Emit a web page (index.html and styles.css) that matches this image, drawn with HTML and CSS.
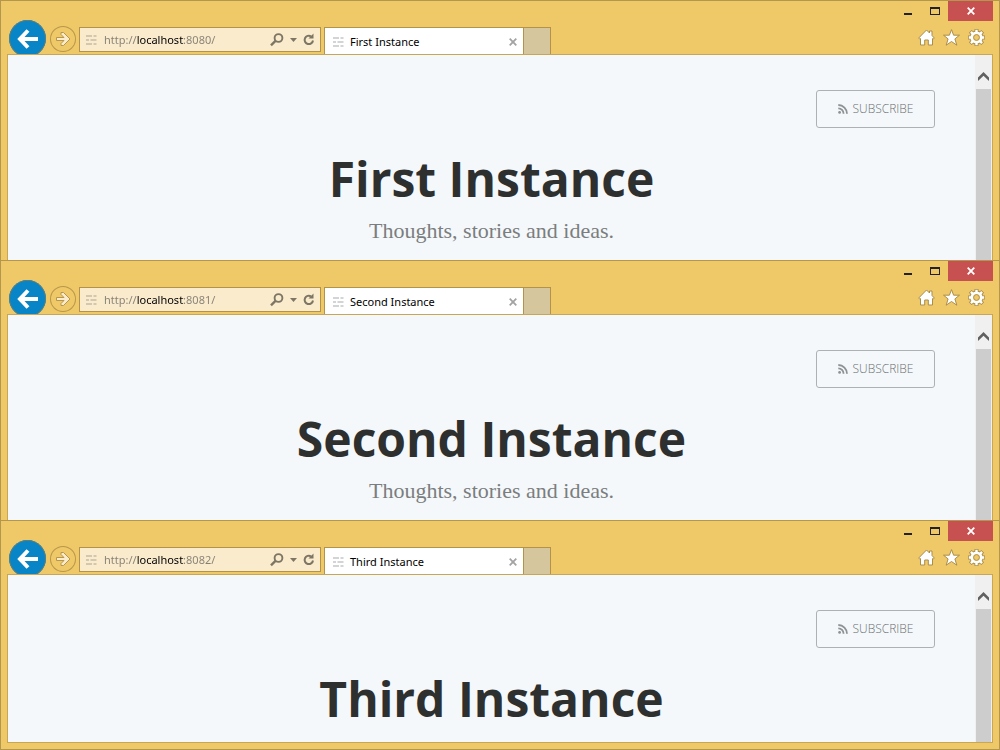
FILE: index.html
```
<!DOCTYPE html>
<html lang="en">
<head>
<meta charset="utf-8">
<meta name="viewport" content="width=device-width, initial-scale=1">
<title>Instances</title>
<link rel="stylesheet" href="styles.css">
</head>
<body>
<svg class="sprite" aria-hidden="true">
  <symbol id="back" viewBox="0 0 37 37"><path d="M10.500 19H29M19 10.500L11 19L19 27.500" fill="none" stroke="#fff" stroke-width="4"/></symbol>
  <symbol id="forward" viewBox="0 0 26 26"><path d="M6.500 11.500H14L11 8.500V6.500H13.500L20 13L13.500 19.500H11V17.500L14 14.500H6.500Z" fill="#faebcd" stroke="#b8974a" stroke-width="1"/></symbol>
  <symbol id="ghost" viewBox="0 0 11 10"><path d="M0 1H6M7.500 1H10.500M0 5H3M4.500 5H10.500M0 9H6M7.500 9H10.500" stroke="currentColor" stroke-width="1.600" fill="none"/></symbol>
  <symbol id="search" viewBox="0 0 14 14"><circle cx="8.500" cy="5" r="3.900" fill="none" stroke="#7d7665" stroke-width="1.900"/><path d="M5.700 7.700L1 12.400" stroke="#7d7665" stroke-width="2.400"/></symbol>
  <symbol id="caret" viewBox="0 0 7 4"><path d="M0 0H7L3.500 4Z" fill="#7d7665"/></symbol>
  <symbol id="reload" viewBox="0 0 12 13"><path d="M8 3.300A4.200 4.200 0 1 0 10 7.500" fill="none" stroke="#7d7665" stroke-width="2"/><path d="M10.500 .500V5.500H5.500Z" fill="#7d7665"/></symbol>
  <symbol id="cross" viewBox="0 0 8 8"><path d="M.700 .700L7.300 7.300M7.300 .700L.700 7.300" stroke="currentColor" stroke-width="1.800" fill="none"/></symbol>
  <symbol id="home" viewBox="0 0 17 17"><path d="M8.500 1L11.500 4V2H14V6.500L16.300 9L15.200 10.200L14.500 9.600V16H10.300V11H6.700V16H2.500V9.600L1.800 10.200L.700 9Z" fill="#fff" stroke="#a98d4c" stroke-width="1"/></symbol>
  <symbol id="star" viewBox="0 0 17 17"><path d="M8.500 .600L10.600 6.200H16.500L11.900 9.900L13.800 16.200L8.500 12.500L3.200 16.200L5.100 9.900L.500 6.200H6.400Z" fill="#fff" stroke="#a98d4c" stroke-width="1"/></symbol>
  <symbol id="gear" viewBox="0 0 17 17"><g fill="none"><path d="M8.500 0V17M0 8.500H17M2.300 2.300L14.700 14.700M14.700 2.300L2.300 14.700" stroke="#a98d4c" stroke-width="4"/><circle cx="8.500" cy="8.500" r="5" stroke="#a98d4c" stroke-width="3.800"/><path d="M8.500 .800V16.200M.800 8.500H16.200M2.900 2.900L14.100 14.100M14.100 2.900L2.900 14.100" stroke="#fff" stroke-width="2.400"/></g><circle cx="8.500" cy="8.500" r="4.700" fill="#efc868" stroke="#fff" stroke-width="2.800"/><circle cx="8.500" cy="8.500" r="2.900" fill="#efc868" stroke="#a98d4c" stroke-width=".9"/></symbol>
  <symbol id="up" viewBox="0 0 11 9"><path d="M0 5.500L5.500 0L11 5.500V9L5.500 3.800L0 9Z" fill="#606060"/></symbol>
  <symbol id="rss" viewBox="0 0 10 10"><circle cx="1.600" cy="8.400" r="1.400" fill="#8f9294"/><path d="M.300 4.400A5.300 5.300 0 0 1 5.600 9.700M.300 1A8.700 8.700 0 0 1 9 9.700" fill="none" stroke="#8f9294" stroke-width="1.800"/></symbol>
</svg>

<main class="desktop">
  <section class="window">
    <header class="chrome">
      <div class="nav">
        <button class="back" aria-label="Back"><svg width="37" height="37"><use href="#back"/></svg></button>
        <button class="forward" aria-label="Forward"><svg width="26" height="26"><use href="#forward"/></svg></button>
        <form class="address">
          <svg class="site" width="11" height="10"><use href="#ghost"/></svg>
          <input class="url" type="text" aria-label="Address" value="http://localhost:8080/">
          <button type="button" class="plain" aria-label="Search"><svg width="14" height="14"><use href="#search"/></svg></button>
          <button type="button" class="plain" aria-label="Show addresses"><svg width="7" height="4"><use href="#caret"/></svg></button>
          <button type="button" class="plain" aria-label="Refresh"><svg width="12" height="13"><use href="#reload"/></svg></button>
        </form>
        <div class="tab">
          <svg class="tab-icon" width="11" height="10"><use href="#ghost"/></svg>
          <span class="tab-title">First Instance</span>
          <button class="plain tab-close" aria-label="Close tab"><svg width="8" height="8"><use href="#cross"/></svg></button>
        </div>
        <button class="new-tab" aria-label="New tab"></button>
      </div>
      <div class="side">
        <div class="controls">
          <button class="control" aria-label="Minimize"><span class="minimize"></span></button>
          <button class="control" aria-label="Maximize"><span class="maximize"></span></button>
          <button class="close" aria-label="Close"><svg width="8" height="8"><use href="#cross"/></svg></button>
        </div>
        <div class="tools">
          <button class="plain" aria-label="Home"><svg width="17" height="17"><use href="#home"/></svg></button>
          <button class="plain" aria-label="Favorites"><svg width="17" height="17"><use href="#star"/></svg></button>
          <button class="plain" aria-label="Tools"><svg width="17" height="17"><use href="#gear"/></svg></button>
        </div>
      </div>
    </header>
    <div class="viewport">
      <article class="page">
        <a class="subscribe" href="#"><svg width="10" height="10"><use href="#rss"/></svg>SUBSCRIBE</a>
        <h1 class="title">First Instance</h1>
        <p class="tagline">Thoughts, stories and ideas.</p>
      </article>
      <div class="scrollbar"><button class="scroll-up" aria-label="Scroll up"><svg width="11" height="9"><use href="#up"/></svg></button><div class="thumb"></div></div>
    </div>
  </section>

  <section class="window">
    <header class="chrome">
      <div class="nav">
        <button class="back" aria-label="Back"><svg width="37" height="37"><use href="#back"/></svg></button>
        <button class="forward" aria-label="Forward"><svg width="26" height="26"><use href="#forward"/></svg></button>
        <form class="address">
          <svg class="site" width="11" height="10"><use href="#ghost"/></svg>
          <input class="url" type="text" aria-label="Address" value="http://localhost:8081/">
          <button type="button" class="plain" aria-label="Search"><svg width="14" height="14"><use href="#search"/></svg></button>
          <button type="button" class="plain" aria-label="Show addresses"><svg width="7" height="4"><use href="#caret"/></svg></button>
          <button type="button" class="plain" aria-label="Refresh"><svg width="12" height="13"><use href="#reload"/></svg></button>
        </form>
        <div class="tab">
          <svg class="tab-icon" width="11" height="10"><use href="#ghost"/></svg>
          <span class="tab-title">Second Instance</span>
          <button class="plain tab-close" aria-label="Close tab"><svg width="8" height="8"><use href="#cross"/></svg></button>
        </div>
        <button class="new-tab" aria-label="New tab"></button>
      </div>
      <div class="side">
        <div class="controls">
          <button class="control" aria-label="Minimize"><span class="minimize"></span></button>
          <button class="control" aria-label="Maximize"><span class="maximize"></span></button>
          <button class="close" aria-label="Close"><svg width="8" height="8"><use href="#cross"/></svg></button>
        </div>
        <div class="tools">
          <button class="plain" aria-label="Home"><svg width="17" height="17"><use href="#home"/></svg></button>
          <button class="plain" aria-label="Favorites"><svg width="17" height="17"><use href="#star"/></svg></button>
          <button class="plain" aria-label="Tools"><svg width="17" height="17"><use href="#gear"/></svg></button>
        </div>
      </div>
    </header>
    <div class="viewport">
      <article class="page">
        <a class="subscribe" href="#"><svg width="10" height="10"><use href="#rss"/></svg>SUBSCRIBE</a>
        <h1 class="title">Second Instance</h1>
        <p class="tagline">Thoughts, stories and ideas.</p>
      </article>
      <div class="scrollbar"><button class="scroll-up" aria-label="Scroll up"><svg width="11" height="9"><use href="#up"/></svg></button><div class="thumb"></div></div>
    </div>
  </section>

  <section class="window window-front">
    <header class="chrome">
      <div class="nav">
        <button class="back" aria-label="Back"><svg width="37" height="37"><use href="#back"/></svg></button>
        <button class="forward" aria-label="Forward"><svg width="26" height="26"><use href="#forward"/></svg></button>
        <form class="address">
          <svg class="site" width="11" height="10"><use href="#ghost"/></svg>
          <input class="url" type="text" aria-label="Address" value="http://localhost:8082/">
          <button type="button" class="plain" aria-label="Search"><svg width="14" height="14"><use href="#search"/></svg></button>
          <button type="button" class="plain" aria-label="Show addresses"><svg width="7" height="4"><use href="#caret"/></svg></button>
          <button type="button" class="plain" aria-label="Refresh"><svg width="12" height="13"><use href="#reload"/></svg></button>
        </form>
        <div class="tab">
          <svg class="tab-icon" width="11" height="10"><use href="#ghost"/></svg>
          <span class="tab-title">Third Instance</span>
          <button class="plain tab-close" aria-label="Close tab"><svg width="8" height="8"><use href="#cross"/></svg></button>
        </div>
        <button class="new-tab" aria-label="New tab"></button>
      </div>
      <div class="side">
        <div class="controls">
          <button class="control" aria-label="Minimize"><span class="minimize"></span></button>
          <button class="control" aria-label="Maximize"><span class="maximize"></span></button>
          <button class="close" aria-label="Close"><svg width="8" height="8"><use href="#cross"/></svg></button>
        </div>
        <div class="tools">
          <button class="plain" aria-label="Home"><svg width="17" height="17"><use href="#home"/></svg></button>
          <button class="plain" aria-label="Favorites"><svg width="17" height="17"><use href="#star"/></svg></button>
          <button class="plain" aria-label="Tools"><svg width="17" height="17"><use href="#gear"/></svg></button>
        </div>
      </div>
    </header>
    <div class="viewport">
      <article class="page">
        <a class="subscribe" href="#"><svg width="10" height="10"><use href="#rss"/></svg>SUBSCRIBE</a>
        <h1 class="title">Third Instance</h1>
      </article>
      <div class="scrollbar"><button class="scroll-up" aria-label="Scroll up"><svg width="11" height="9"><use href="#up"/></svg></button><div class="thumb"></div></div>
    </div>
  </section>
</main>
</body>
</html>
```
FILE: styles.css
```
* { box-sizing: border-box; }
body { margin: 0; background: #efc868; font-family: "Noto Sans", "Open Sans", sans-serif; }
svg { display: block; flex: none; overflow: visible; }
button { margin: 0; padding: 0; border: 0; background: none; }
.sprite { position: absolute; width: 0; height: 0; overflow: hidden; }

.window {
  border: 1px solid #b3974e;
  border-bottom: 0;
  background: #efc868;
}
.window-front { border-bottom: 1px solid #b3974e; padding-bottom: 6px; }

.chrome { display: flex; justify-content: space-between; height: 53px; overflow: hidden; }
.nav { display: flex; align-items: flex-start; padding-left: 8px; }
.back { margin-top: 19px; border-radius: 50%; background: #0785c6; box-shadow: inset 0 0 0 1px #587f83; }
.forward { margin: 25px 3px 0 4px; border-radius: 50%; box-shadow: inset 0 0 0 1px #b8974a; }
.address {
  display: flex;
  align-items: center;
  gap: 6px;
  width: 242px;
  height: 25px;
  margin: 26px 3px 0 0;
  padding: 0 5px 0 6px;
  border: 1px solid #b3934a;
  background: #faebcd;
}
.site { color: #c5bda5; }
/* The host name stands out from the scheme and the port. */
.url {
  flex: 1;
  min-width: 0;
  margin: 0 0 0 1px;
  padding: 0;
  border: 0;
  outline: 0;
  font: 11px/20px "Noto Sans", "Open Sans", sans-serif;
  color: transparent;
  background: linear-gradient(90deg, #858074 33px, #000 33px, #000 80px, #858074 80px);
  -webkit-background-clip: text;
  background-clip: text;
}
.tab {
  display: flex;
  align-items: center;
  width: 200px;
  height: 28px;
  margin-top: 26px;
  padding: 1px 6px 0 8px;
  border: 1px solid #b3934a;
  border-bottom: 0;
  background: #fff;
}
.tab-icon { color: #c3c6c8; }
.tab-title { flex: 1; margin-left: 6px; font-size: 11px; line-height: 20px; color: #000; }
.tab-close { color: #a3a3a3; }
.new-tab { width: 27px; height: 28px; margin-top: 26px; border: 1px solid #b3934a; border-left: 0; border-bottom: 0; background: #d6c69d; }

.side { display: flex; flex-direction: column; align-items: flex-end; padding-right: 6px; }
.controls { display: flex; height: 20px; }
.control { display: flex; align-items: center; justify-content: center; width: 27px; }
.minimize { width: 8px; height: 2px; margin-top: 6px; background: #222; }
.maximize { width: 10px; height: 8px; border: 1px solid #222; border-top-width: 2px; }
.close { display: flex; align-items: center; justify-content: center; width: 45px; background: #c75050; color: #fff; }
.tools { display: flex; gap: 8px; padding: 8px 8px 0 0; }

.viewport { display: flex; min-height: 206px; margin: 0 6px; border: 1px solid #c7a755; border-bottom: 0; background: #f4f8fb; }
.window-front .viewport { min-height: 169px; border-bottom: 1px solid #c7a755; }
.page { flex: 1; display: flex; flex-direction: column; align-items: center; padding-top: 35px; }
.subscribe {
  display: flex;
  align-items: center;
  justify-content: center;
  align-self: flex-end;
  gap: 5px;
  width: 119px;
  height: 38px;
  margin-right: 40px;
  border: 1px solid #aeb1b3;
  border-radius: 3px;
  font: 300 12px/20px "Open Sans", sans-serif;
  color: #6c6f71;
  text-decoration: none;
}
.title { margin: 22px 0 0; font: 700 48px/58px "Open Sans", sans-serif; color: #2e3030; }
.tagline { margin: 8px 0 0; font: 22px/30px "Liberation Serif", serif; color: #7b7d7e; }
.scrollbar { display: flex; flex-direction: column; width: 17px; padding: 0 1px; background: #f0f0f0; }
.scroll-up { display: flex; align-items: center; justify-content: center; height: 34px; padding-top: 8px; }
.thumb { flex: 1; background: #cdcdcd; }
```
